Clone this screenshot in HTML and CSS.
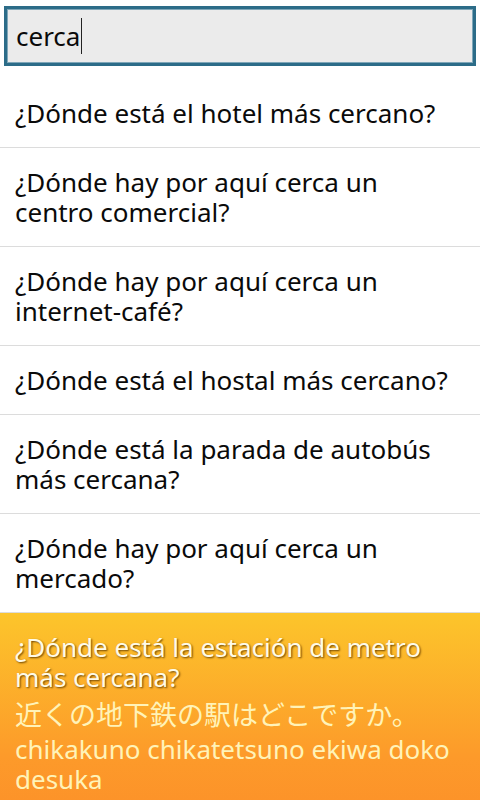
FILE: index.html
```html
<!DOCTYPE html>
<html lang="es">
<head>
    <meta charset="UTF-8">
    <title>Frases</title>
    <link rel="stylesheet" href="styles.css">
</head>
<body>
<div class="search">
    <div class="search-box">cerca<span class="caret"></span></div>
</div>
<ul class="list">
    <li class="item">¿Dónde está el hotel más cercano?</li>
    <li class="item">¿Dónde hay por aquí cerca un centro comercial?</li>
    <li class="item">¿Dónde hay por aquí cerca un internet-café?</li>
    <li class="item">¿Dónde está el hostal más cercano?</li>
    <li class="item">¿Dónde está la parada de autobús más cercana?</li>
    <li class="item">¿Dónde hay por aquí cerca un mercado?</li>
    <li class="item active">
        <div class="phrase">¿Dónde está la estación de metro más cercana?</div>
        <div class="jp">近くの地下鉄の駅はどこですか。</div>
        <div class="roma">chikakuno chikatetsuno ekiwa doko desuka</div>
    </li>
</ul>
</body>
</html>
```

FILE: styles.css
```css
* {
    margin: 0;
    padding: 0;
    list-style: none;
    box-sizing: border-box;
}

html, body {
    height: 100%;
    overflow: hidden;
}

body {
    background: #fff;
    font-family: "Noto Sans", "Noto Sans CJK JP", sans-serif;
    color: #0a0a0a;
}

.search {
    padding: 6px 4px 13px;
}

.search-box {
    height: 60px;
    border: 3px solid #2c6c88;
    background: #ebebeb;
    box-shadow: inset 0 0 0 1px #7fa6b8;
    padding: 0 9px;
    font-size: 26px;
    line-height: 54px;
    display: flex;
    align-items: center;
}

.caret {
    display: inline-block;
    width: 1px;
    height: 36px;
    margin-left: 1px;
    background: #222;
}

.item {
    padding: 19px 22px 19px 15px;
    font-size: 26px;
    line-height: 30px;
    border-bottom: 1px solid #dcdcdc;
}

.active {
    border-bottom: none;
    height: 240px;
    background: linear-gradient(#fcc52b, #fd9a2a 60%, #fb8b28);
}

.phrase {
    color: #fffbe8;
    text-shadow: 1px 1px 2px #6b4300;
}

.jp {
    color: #fff3b8;
    font-size: 27px;
    line-height: 38px;
    margin-top: 4px;
}

.roma {
    color: #fff3b8;
}
```
